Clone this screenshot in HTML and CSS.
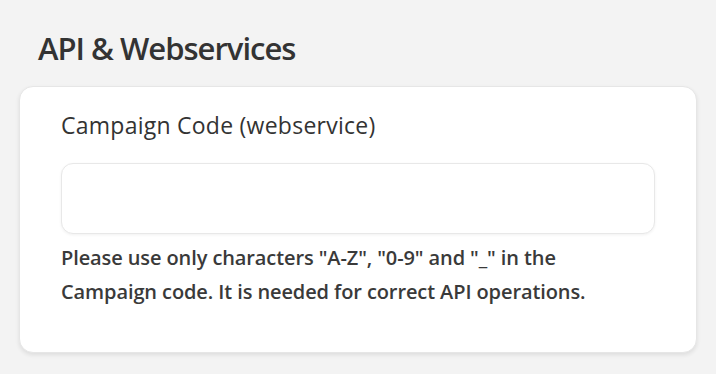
FILE: index.html
```html
<!DOCTYPE html>
<html lang="en">

<head>
    <meta charset="UTF-8">
    <meta name="viewport" content="width=device-width, initial-scale=1.0">
    <title>API &amp; Webservices</title>
    <link rel="stylesheet" href="styles.css">
</head>

<body>
    <div class="section">
        <h2 class="section-title">API &amp; Webservices</h2>

        <div class="card">
            <label class="field-label" for="campaign-code">Campaign Code (webservice)</label>
            <input class="field-input" type="text" id="campaign-code">
            <p class="field-help">Please use only characters "A-Z", "0-9" and "_" in the Campaign code. It is needed for correct API operations.</p>
        </div>
    </div>
</body>

</html>
```

FILE: styles.css
```css
body {
    margin: 0;
    background-color: #f3f3f3;
    font-family: "Open Sans", Lato, sans-serif;
    color: #333;
}

.section {
    padding: 28px 19px 20px 19px;
}

.section-title {
    margin: 0 0 18px 19px;
    font-size: 31px;
    font-weight: 600;
    line-height: 40px;
    letter-spacing: -1px;
    color: #333;
}

.card {
    background-color: #fff;
    border: 1px solid #e6e6e6;
    border-radius: 14px;
    box-shadow: 0 2px 4px rgba(0, 0, 0, 0.09);
    padding: 23px 41px 43px 41px;
}

.field-label {
    display: block;
    font-size: 23px;
    line-height: 30px;
    letter-spacing: 0.25px;
    margin-bottom: 23px;
}

.field-input {
    display: block;
    box-sizing: border-box;
    width: 100%;
    height: 71px;
    border: 1.5px solid #e8e8e8;
    border-radius: 12px;
    box-shadow: 0 1px 3px rgba(0, 0, 0, 0.06);
    background-color: #fff;
    font-family: inherit;
    font-size: 18px;
    padding: 0 16px;
}

.field-help {
    margin: 7px 60px 0 0;
    font-size: 20px;
    font-weight: 600;
    line-height: 34px;
    letter-spacing: -0.1px;
    color: #3a3a3a;
}
```
